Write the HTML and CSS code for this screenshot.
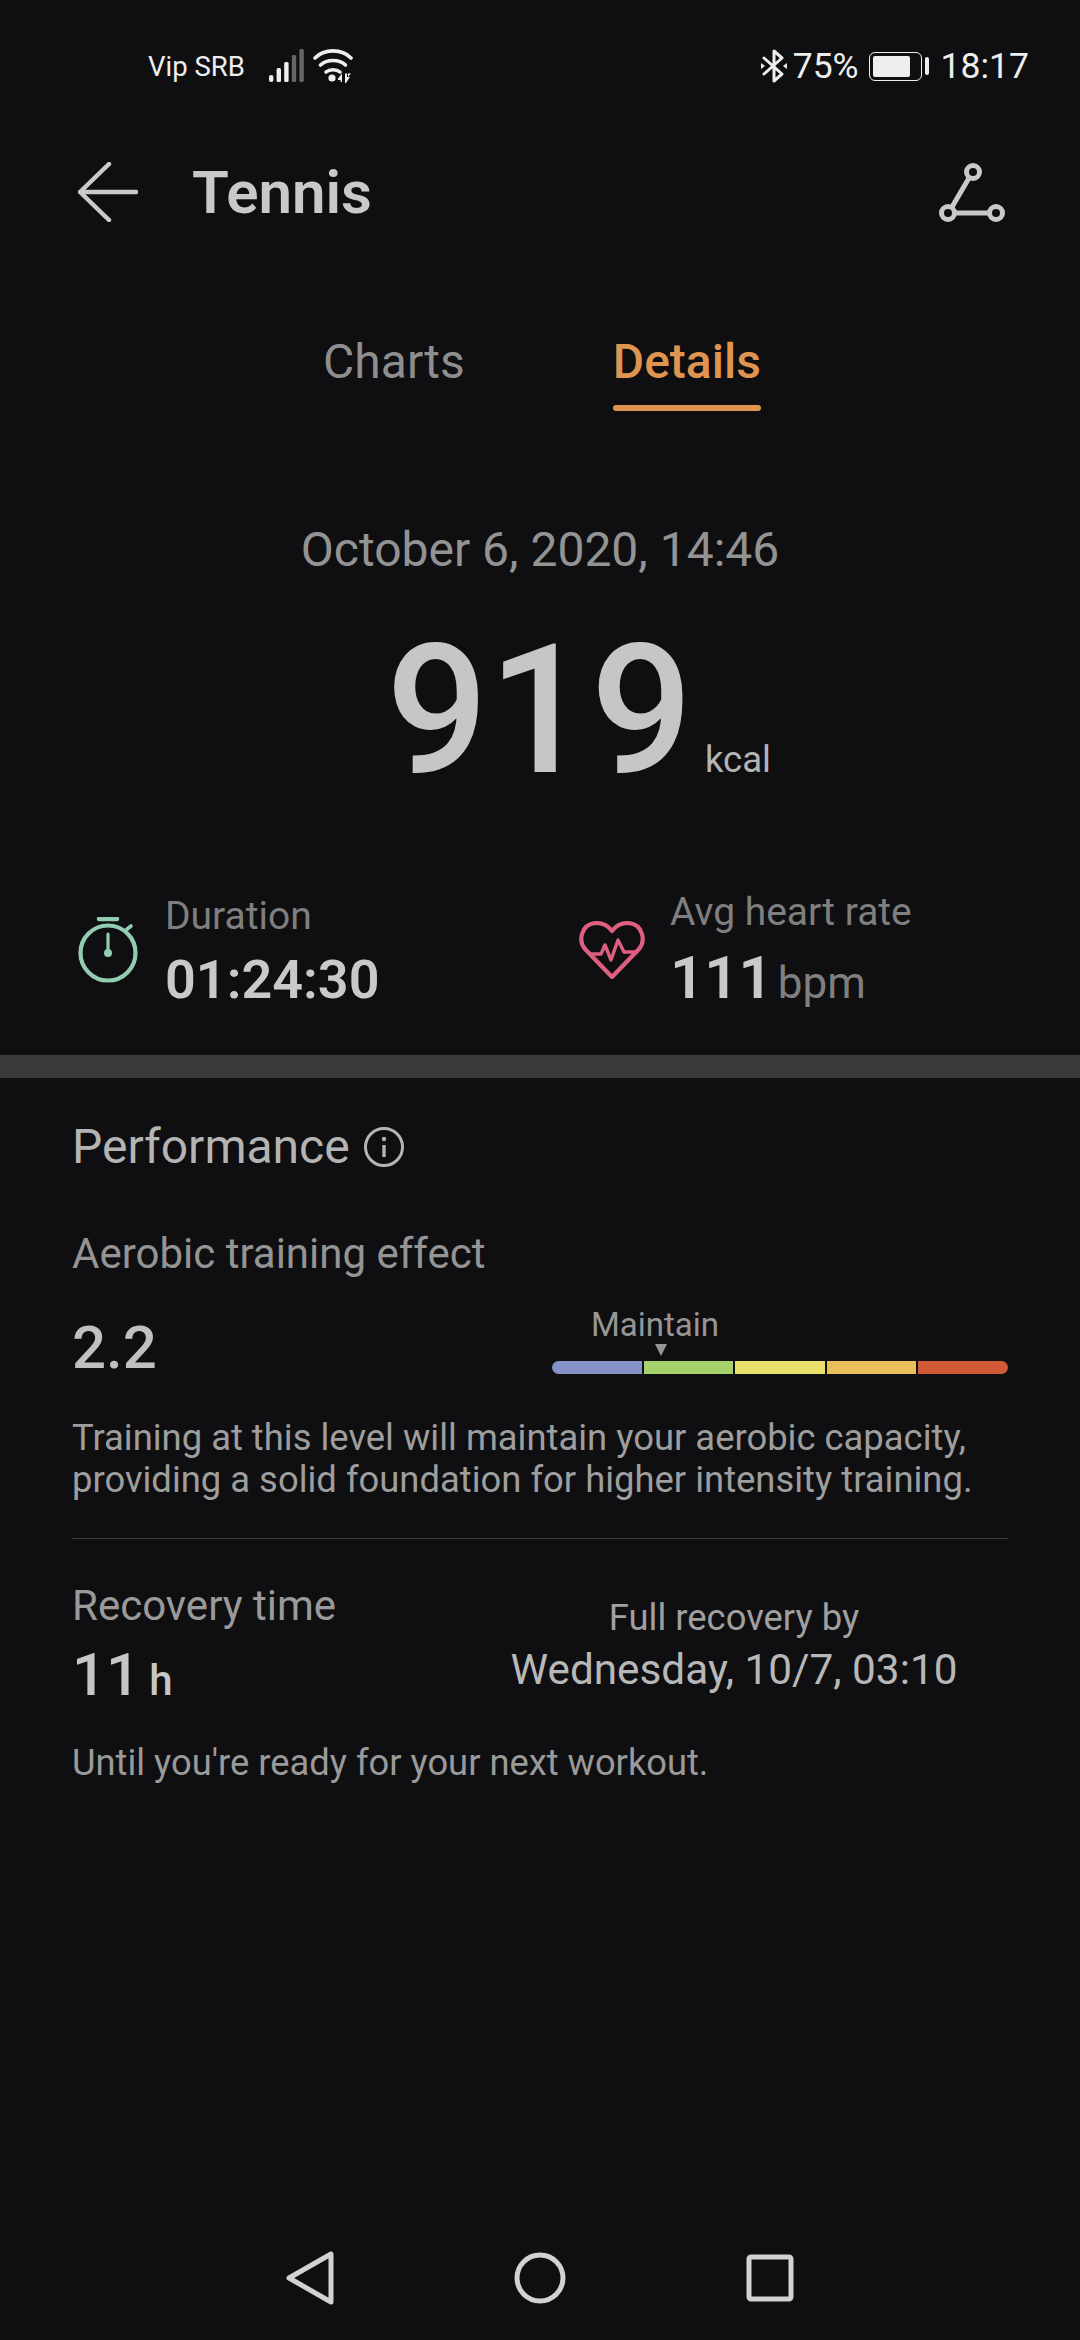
FILE: index.html
```html
<!DOCTYPE html>
<html lang="en">
<head>
    <meta charset="UTF-8">
    <meta name="viewport" content="width=device-width, initial-scale=1.0">
    <title>Tennis</title>
    <link rel="stylesheet" href="styles.css">
</head>
<body>
    <div class="page">
        <div class="status">
            <span class="carrier">Vip SRB</span>
            <svg class="signal" width="36" height="34" viewBox="0 0 36 34">
                <rect x="1" y="26" width="4.4" height="7" rx="2" fill="#eee"/>
                <rect x="8.6" y="19" width="4.4" height="14" rx="1.5" fill="#eee"/>
                <rect x="16.2" y="13" width="4.4" height="20" rx="1.5" fill="#eee"/>
                <rect x="23.8" y="6" width="4.4" height="27" rx="1.5" fill="#666"/>
                <rect x="31.4" y="0" width="4.4" height="33" rx="1.5" fill="#666"/>
            </svg>
            <svg class="wifi" width="40" height="34" viewBox="0 0 40 34">
                <g fill="none" stroke="#eee" stroke-width="3.6" stroke-linecap="round">
                    <path d="M2 9C11 -0.5 29 -0.5 38 9"/>
                    <path d="M7.5 16C14 10 26 10 32.5 16"/>
                    <path d="M13 23C16.5 20 23.5 20 27 23"/>
                </g>
                <circle cx="19" cy="29" r="3.6" fill="#eee"/>
                <path d="M25 29.500L29 24.500V33H27.600V31H25ZM32 24.500H34V28H37L33 34H32ZM35 28V24.500H38Z" fill="#eee"/>
            </svg>
            <span class="status-right">
                <svg class="bt" width="26" height="34" viewBox="0 0 26 34">
                    <path d="M3 9L21 25L13 32V2L21 9L3 25" fill="none" stroke="#eee" stroke-width="3" stroke-linecap="round" stroke-linejoin="round"/>
                    <path d="M0 14L4 17L0 20ZM26 14L22 17L26 20Z" fill="#eee"/>
                </svg>
                <span class="pct">75%</span>
                <span class="battery"><span class="battery-fill"></span></span>
                <span class="battery-nub"></span>
                <span class="clock">18:17</span>
            </span>
        </div>

        <div class="toolbar">
            <svg class="back" width="60" height="60" viewBox="0 0 60 60">
                <path d="M31 2L2 30L31 58M2 30H58" fill="none" stroke="#c9c9c9" stroke-width="4.500" stroke-linecap="round" stroke-linejoin="round"/>
            </svg>
            <h1 class="title">Tennis</h1>
            <svg class="route" width="68" height="62" viewBox="0 0 68 62">
                <g fill="none" stroke="#c9c9c9" stroke-width="5">
                    <circle cx="35" cy="11" r="6.500"/>
                    <circle cx="10" cy="52" r="6.500"/>
                    <circle cx="58" cy="52" r="6.500"/>
                    <path d="M31 17L14 46M17 52H51"/>
                </g>
            </svg>
        </div>

        <div class="tabs">
            <div class="tab">Charts</div>
            <div class="tab tab-active">Details</div>
        </div>

        <div class="date">October 6, 2020, 14:46</div>
        <div class="score">
            <span class="score-num">919</span>
            <span class="score-unit">kcal</span>
        </div>

        <div class="stats">
            <div class="stat">
                <svg class="stat-icon" width="60" height="66" viewBox="0 0 60 66">
                    <g fill="none" stroke="#93cdb0" stroke-linecap="round">
                        <circle cx="30" cy="36" r="27.500" stroke-width="4.200"/>
                        <path d="M21 2H39" stroke-width="4.500"/>
                        <path d="M48 13L53 9" stroke-width="3.600"/>
                        <path d="M30 17V36" stroke-width="3.200"/>
                    </g>
                    <circle cx="30" cy="36" r="4" fill="#93cdb0"/>
                </svg>
                <div class="stat-text">
                    <div class="stat-label stat-label-low">Duration</div>
                    <div class="stat-value">01:24:30</div>
                </div>
            </div>
            <div class="stat stat-heart">
                <svg class="stat-icon" width="66" height="58" viewBox="0 0 66 58">
                    <path d="M33 56L6 28C-1 20 2 3 17 2C24 2 30 6 33 10C36 6 42 2 49 2C64 3 67 20 60 28Z" fill="none" stroke="#de5f80" stroke-width="4.200" stroke-linejoin="round"/>
                    <path d="M12 33H22L26 24L32 39L39 19L45 31H59" fill="none" stroke="#de5f80" stroke-width="3.400" stroke-linejoin="round"/>
                </svg>
                <div class="stat-text">
                    <div class="stat-label stat-label-high">Avg heart rate</div>
                    <div class="stat-value stat-value-big">111<span class="stat-unit">bpm</span></div>
                </div>
            </div>
        </div>

        <div class="band"></div>

        <div class="section">
            <div class="perf">
                <span>Performance</span>
                <svg width="42" height="42" viewBox="0 0 42 42">
                    <circle cx="21" cy="21" r="18.500" fill="none" stroke="#b4b4b4" stroke-width="3"/>
                    <path d="M21 19V31" stroke="#b4b4b4" stroke-width="3.400"/>
                    <circle cx="21" cy="13" r="2.200" fill="#b4b4b4"/>
                </svg>
            </div>
            <div class="sub-title">Aerobic training effect</div>
            <div class="effect">
                <div class="effect-value">2.2</div>
                <div class="gauge">
                    <div class="gauge-label">Maintain</div>
                    <div class="gauge-mark"></div>
                    <div class="gauge-bar">
                        <span class="seg seg-1"></span>
                        <span class="seg seg-2"></span>
                        <span class="seg seg-3"></span>
                        <span class="seg seg-4"></span>
                        <span class="seg seg-5"></span>
                    </div>
                </div>
            </div>
            <p class="desc">Training at this level will maintain your aerobic capacity, providing a solid foundation for higher intensity training.</p>
            <div class="divider"></div>
            <div class="recovery">
                <div>
                    <div class="rec-label">Recovery time</div>
                    <div class="rec-value">11<span class="rec-unit">h</span></div>
                </div>
                <div class="rec-right">
                    <div class="rec-by">Full recovery by</div>
                    <div class="rec-date">Wednesday, 10/7, 03:10</div>
                </div>
            </div>
            <p class="until">Until you're ready for your next workout.</p>
        </div>

        <div class="nav">
            <svg width="60" height="60" viewBox="0 0 60 60">
                <path d="M9 30L51 6V54Z" fill="none" stroke="#d2d2d2" stroke-width="5" stroke-linejoin="round"/>
            </svg>
            <svg width="60" height="60" viewBox="0 0 60 60">
                <circle cx="30" cy="30" r="23" fill="none" stroke="#d2d2d2" stroke-width="5"/>
            </svg>
            <svg width="60" height="60" viewBox="0 0 60 60">
                <rect x="9" y="9" width="42" height="42" rx="2" fill="none" stroke="#d2d2d2" stroke-width="5"/>
            </svg>
        </div>
    </div>
</body>
</html>
```

FILE: styles.css
```css
* {
    box-sizing: border-box;
}
body {
    margin: 0;
    background-color: #0f0f11;
    font-family: Roboto, "Noto Sans", sans-serif;
}
.page {
    width: 1080px;
    height: 2340px;
    display: flex;
    flex-direction: column;
    overflow: hidden;
}

/* status bar */
.status {
    height: 132px;
    display: flex;
    align-items: center;
    padding-left: 148px;
    padding-right: 51px;
    color: #eee;
}
.carrier {
    font-size: 27.5px;
}
.signal {
    margin-left: 23px;
}
.wifi {
    margin-left: 9px;
}
.status-right {
    margin-left: auto;
    display: flex;
    align-items: center;
    font-size: 35.5px;
}
.pct {
    margin-left: 6px;
}
.battery {
    width: 53px;
    height: 29px;
    margin-left: 10px;
    padding: 3px;
    border: 1.5px solid #eee;
    border-radius: 6px;
}
.battery-fill {
    display: block;
    width: 37px;
    height: 100%;
    background: #eee;
    border-radius: 2px;
}
.battery-nub {
    width: 4px;
    height: 18px;
    margin-left: 3px;
    background: #eee;
    border-radius: 2px;
}
.clock {
    margin-left: 12px;
}

/* toolbar */
.toolbar {
    height: 120px;
    display: flex;
    align-items: center;
    padding-left: 78px;
    padding-right: 74px;
}
.title {
    margin: 0 0 0 54px;
    font-size: 60px;
    font-weight: 560;
    color: #c9c9c9;
}
.route {
    margin-left: auto;
}

/* tabs */
.tabs {
    display: flex;
    justify-content: center;
    gap: 148px;
    margin-top: 80px;
    padding-left: 4px;
}
.tab {
    font-size: 48px;
    line-height: 60px;
    padding-bottom: 19px;
    color: #8e8e8e;
}
.tab-active {
    padding-bottom: 0;
    font-weight: 500;
    color: #df9550;
}
.tab-active::after {
    content: "";
    display: block;
    height: 6px;
    margin-top: 13px;
    background: #df9550;
    border-radius: 3px;
}

/* summary */
.date {
    margin-top: 109px;
    text-align: center;
    font-size: 48px;
    line-height: 60px;
    color: #939393;
}
.score {
    display: flex;
    align-items: baseline;
    gap: 12px;
    margin-top: 31px;
    padding-left: 386px;
    line-height: 200px;
    height: 200px;
}
.score-num {
    font-size: 180px;
    font-weight: 530;
    color: #c6c6c6;
}
.score-unit {
    font-size: 36.5px;
    color: #b4b4b4;
}
.stats {
    display: grid;
    grid-template-columns: 501px 1fr;
    margin-top: 73px;
    padding-left: 78px;
}
.stat {
    display: flex;
    align-items: center;
    gap: 27px;
}
.stat-heart {
    gap: 25px;
}
.stat-label {
    font-size: 39px;
    line-height: 50px;
    color: #7f7f7f;
}
.stat-label-low {
    margin-top: 4px;
}
.stat-label-high {
    margin-top: 3px;
}
.stat-value {
    margin-top: 6px;
    font-size: 54px;
    line-height: 66px;
    font-weight: 600;
    color: #c9c9c9;
}
.stat-value-big {
    margin-top: 8px;
    font-size: 60px;
}
.stat-unit {
    margin-left: 5px;
    font-size: 44px;
    font-weight: 400;
    color: #7f7f7f;
}
.band {
    height: 23px;
    margin-top: 39px;
    background: #3a3a3c;
}

/* performance */
.section {
    padding: 39px 72px 0;
}
.perf {
    display: flex;
    align-items: center;
    gap: 13px;
    font-size: 48px;
    line-height: 60px;
    color: #b4b4b4;
}
.sub-title {
    margin-top: 49px;
    font-size: 42px;
    line-height: 56px;
    color: #949494;
}
.effect {
    display: flex;
    justify-content: space-between;
    margin-top: 23px;
}
.effect-value {
    margin-top: 8px;
    font-size: 60px;
    line-height: 70px;
    font-weight: 500;
    color: #c0c0c0;
}
.gauge {
    width: 456px;
}
.gauge-label {
    padding-left: 39px;
    font-size: 33px;
    line-height: 40px;
    color: #969696;
}
.gauge-mark {
    width: 0;
    height: 0;
    margin-left: 103px;
    margin-top: -1px;
    border-left: 6px solid transparent;
    border-right: 6px solid transparent;
    border-top: 12px solid #969696;
}
.gauge-bar {
    display: flex;
    gap: 2px;
    height: 13px;
    margin-top: 5px;
    border-radius: 7px;
    overflow: hidden;
}
.seg {
    flex: 1;
}
.seg-1 { background: #8593c9; }
.seg-2 { background: #a6d06c; }
.seg-3 { background: #e8e26a; }
.seg-4 { background: #e8bf58; }
.seg-5 { background: #d25a38; }
.desc {
    margin: 34px 0 0;
    font-size: 36.4px;
    line-height: 42px;
    color: #9e9e9e;
}
.divider {
    height: 1px;
    margin-top: 37px;
    background: #3c3c3e;
}
.recovery {
    display: flex;
    justify-content: space-between;
    margin-top: 42px;
}
.rec-label {
    font-size: 42px;
    line-height: 50px;
    color: #9a9a9a;
}
.rec-value {
    margin-top: 9px;
    font-size: 60px;
    line-height: 70px;
    font-weight: 500;
    color: #c6c6c6;
}
.rec-unit {
    margin-left: 9px;
    font-size: 42px;
}
.rec-right {
    width: 548px;
    padding-top: 15px;
    text-align: center;
}
.rec-by {
    font-size: 36.4px;
    line-height: 44px;
    color: #a0a0a0;
}
.rec-date {
    margin-top: 2px;
    font-size: 42.3px;
    line-height: 56px;
    color: #b8b8b8;
}
.until {
    margin: 25px 0 0;
    font-size: 36.3px;
    line-height: 44px;
    color: #9a9a9a;
}

/* navigation bar */
.nav {
    margin-top: auto;
    height: 124px;
    display: flex;
    justify-content: center;
    align-items: center;
    gap: 170px;
}
```
